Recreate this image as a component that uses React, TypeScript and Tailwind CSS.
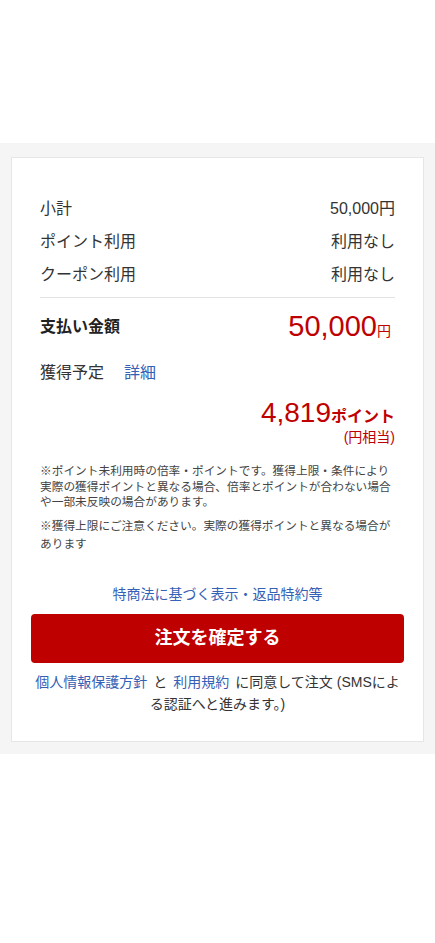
export default function App() {
  const font = { fontFamily: '"Liberation Sans", "Noto Sans CJK JP", sans-serif' };

  return (
    <div className="min-h-[943px] bg-white text-[#333]" style={font}>
      <div className="h-[143px]" />
      <div className="bg-[#f5f5f5] pt-[14px] pb-[12px] px-[11px]">
        <div className="bg-white border border-[#e6e6e6] px-[28px] pt-[34px] pb-[26px]">
          {/* Summary rows */}
          <div className="flex flex-col">
            <div className="flex justify-between items-center h-[33px] text-[16px]">
              <span>小計</span>
              <span>50,000円</span>
            </div>
            <div className="flex justify-between items-center h-[33px] text-[16px]">
              <span>ポイント利用</span>
              <span>利用なし</span>
            </div>
            <div className="flex justify-between items-center h-[33px] text-[16px]">
              <span>クーポン利用</span>
              <span>利用なし</span>
            </div>
          </div>

          <div className="mt-[6px] border-t border-[#e3e3e3]" />

          {/* Total */}
          <div className="flex justify-between items-center h-[58px]">
            <span className="text-[16px] font-bold text-[#222]">支払い金額</span>
            <span className="text-[#bf0000] flex items-baseline mr-[4px]">
              <span className="text-[29px] leading-none">50,000</span>
              <span className="text-[14px]">円</span>
            </span>
          </div>

          {/* Points */}
          <div className="flex items-center h-[34px] text-[16px]">
            <span>獲得予定</span>
            <span className="ml-[20px] text-[#3460b5]">詳細</span>
          </div>
          <div className="flex flex-col items-end mt-[9px] text-[#bf0000]">
            <div className="flex items-baseline leading-none">
              <span className="text-[28px] font-medium">4,819</span>
              <span className="text-[16px] font-bold">ポイント</span>
            </div>
            <span className="text-[14px] mt-[3px] leading-none">(円相当)</span>
          </div>

          {/* Notes */}
          <p className="mt-[19px] text-[11.7px] leading-[15.5px] text-[#444]">
            ※ポイント未利用時の倍率・ポイントです。獲得上限・条件により実際の獲得ポイントと異なる場合、倍率とポイントが合わない場合や一部未反映の場合があります。
          </p>
          <p className="mt-[7px] text-[11.7px] leading-[18px] text-[#444]">
            ※獲得上限にご注意ください。実際の獲得ポイントと異なる場合があります
          </p>

          {/* Actions */}
          <div className="mt-[31px] text-center text-[14px] text-[#3460b5] leading-[20px]">
            特商法に基づく表示・返品特約等
          </div>
          <div className="-mx-[9px]">
            <button className="mt-[10px] w-full h-[49px] rounded-[4px] bg-[#bf0000] text-white text-[18px] font-bold">
              注文を確定する
            </button>
            <p className="mt-[8px] text-center text-[14px] leading-[22px]">
              <span className="text-[#3460b5]">個人情報保護方針</span>
              <span className="mx-[6px]">と</span>
              <span className="text-[#3460b5]">利用規約</span>
              <span className="ml-[6px]">に同意して注文 (SMSによる認証へと進みます。)</span>
            </p>
          </div>
        </div>
      </div>
    </div>
  );
}
